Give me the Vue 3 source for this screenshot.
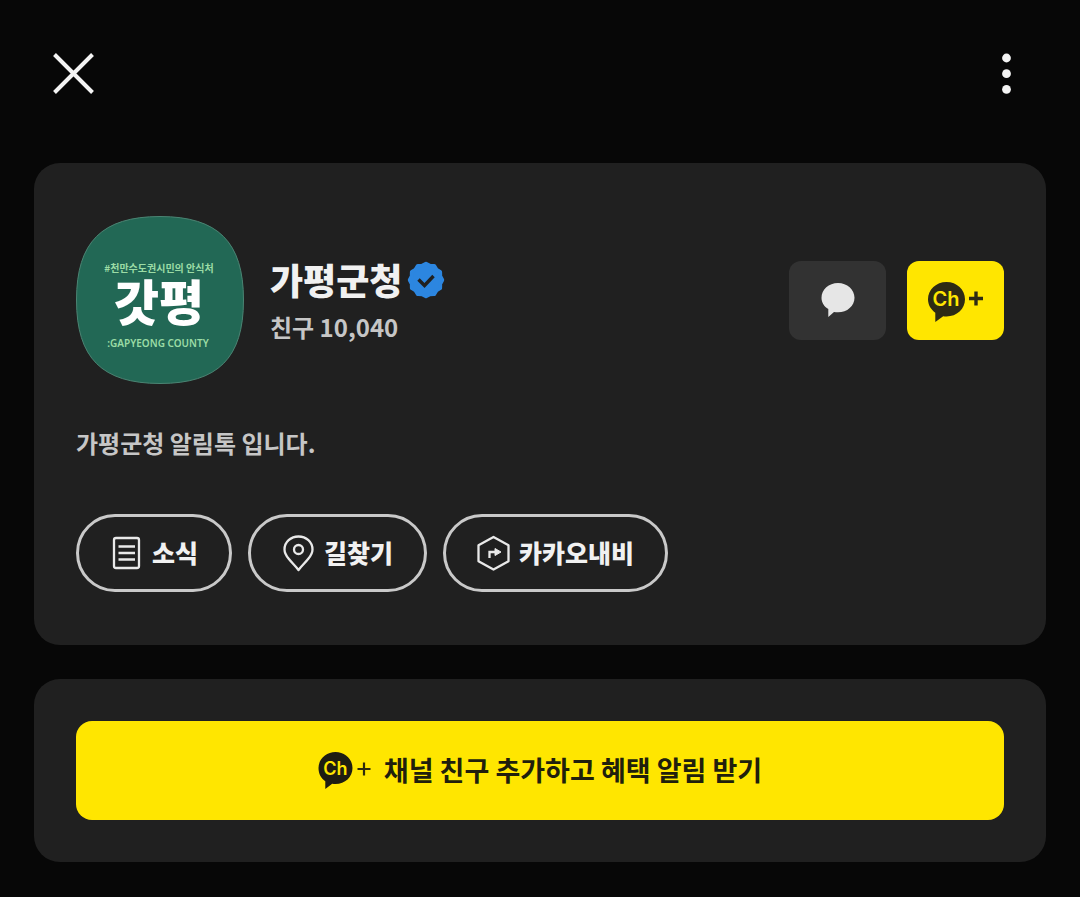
<script setup>
const links = [
  { id: 'news', label: '소식' },
  { id: 'directions', label: '길찾기' },
  { id: 'navi', label: '카카오내비' },
]
</script>

<template>
  <div class="page">
    <header class="topbar">
      <button class="icon-button" type="button" aria-label="닫기">
        <svg width="44" height="44" viewBox="0 0 44 44" fill="none" stroke="#f4f4f4" stroke-width="4">
          <path d="M3.500 2.500L41.500 40.500M41.500 2.500L3.500 40.500" />
        </svg>
      </button>
      <button class="icon-button" type="button" aria-label="더보기">
        <svg width="44" height="44" viewBox="0 0 44 44" fill="#f4f4f4">
          <circle cx="21.500" cy="6" r="4.4" />
          <circle cx="21.500" cy="21.700" r="4.4" />
          <circle cx="21.500" cy="37.400" r="4.400" />
        </svg>
      </button>
    </header>

    <main class="content">
      <section class="card profile">
        <div class="head">
          <svg class="avatar" width="168" height="168" viewBox="0 0 168 168" role="img" aria-label="갓평">
            <path
              d="M84 .5C142 .5 167.500 26 167.500 84S142 167.500 84 167.500S.5 142 .5 84S26 .5 84 .5Z"
              fill="#226855" stroke="#4b8473"
            />
            <text class="tag" x="83" y="56" text-anchor="middle">#천만수도권시민의 안식처</text>
            <text class="logo" x="83" y="105" text-anchor="middle">갓평</text>
            <text class="county" x="82" y="131" text-anchor="middle">:GAPYEONG COUNTY</text>
          </svg>
          <div class="identity">
            <h1 class="name">
              가평군청
              <svg class="badge" width="38" height="38" viewBox="0 0 38 38" role="img" aria-label="인증됨">
                <path
                  fill="#2c86e0" stroke="#2c86e0" stroke-width="4" stroke-linejoin="round"
                  d="M19 2.800L22.900 4.800L27.100 4.900L29.400 8.600L33.100 10.900L33.200 15.100L35.200 19L33.200 22.900L33.100 27.100L29.400 29.400L27.100 33.100L22.900 33.200L19 35.200L15.100 33.200L10.900 33.100L8.600 29.400L4.900 27.100L4.800 22.900L2.800 19L4.800 15.100L4.900 10.900L8.600 8.600L10.900 4.900L15.100 4.800Z"
                />
                <path d="M11.500 18.500L17.500 24.500L26.500 15" fill="none" stroke="#202020" stroke-width="3.400" />
              </svg>
            </h1>
            <p class="friends">친구 10,040</p>
          </div>
          <div class="actions">
            <button class="action chat" type="button" aria-label="채팅">
              <svg width="34" height="36" viewBox="0 0 34 36" fill="#e6e6e6">
                <path d="M17 1C26.200 1 33.500 7.500 33.500 15.700S26.200 30.300 17 30.300C15.500 30.300 14.200 30.200 13 29.900L7.300 35V27C3.200 24.500.5 20.500.5 15.700C.5 7.500 7.800 1 17 1Z" />
              </svg>
            </button>
            <button class="action add" type="button" aria-label="채널 추가">
              <svg width="56" height="38" viewBox="0 0 56 38">
                <path fill="#2e2b14" d="M18.500 1C28.800 1 37 8.500 37 18.300S28.800 35.500 18.500 35.500C17.300 35.500 16.300 35.400 15.200 35.200L7.300 41V31.700C3 28.700 0 24 0 18.300C0 8.500 8.200 1 18.500 1Z" />
                <text class="ch" x="18" y="25" text-anchor="middle">Ch</text>
                <path d="M48 10.500V24.500M41 17.500H55" stroke="#2e2b14" stroke-width="3.400" />
              </svg>
            </button>
          </div>
        </div>

        <p class="about">가평군청 알림톡 입니다.</p>

        <nav class="links">
          <a v-for="link in links" :key="link.id" class="pill" href="#">
            <svg width="34" height="38" viewBox="0 0 34 38" fill="none" stroke="#e9e9e9" stroke-width="2.300">
              <template v-if="link.id === 'news'">
                <rect x="4" y="4" width="25" height="30" rx="2" />
                <path d="M8.500 12.500H25M8.500 19H25M8.500 25.500H25" />
              </template>
              <template v-else-if="link.id === 'directions'">
                <path d="M16.500 36C14 32.500 10 29 6.500 24.500C3.800 21.200 2.500 18.700 2.500 15.500C2.500 8 8.800 2.500 16.500 2.500S30.500 8 30.500 15.500C30.500 18.700 29.200 21.200 26.500 24.500C23 29 19 32.500 16.500 36Z" stroke-linejoin="round" />
                <circle cx="16.500" cy="15.500" r="4.500" />
              </template>
              <template v-else>
                <path d="M16.500 3L31.500 11.200V27.200L16.500 35.500L1.500 27.200V11.200Z" stroke-linejoin="round" />
                <path d="M12.500 24V18H19" />
                <path d="M18 14.500L24 18L18 21.500Z" fill="#e9e9e9" stroke-width="1" />
              </template>
            </svg>
            <span class="label">{{ link.label }}</span>
          </a>
        </nav>
      </section>

      <section class="card promo">
        <button class="cta" type="button">
          <svg width="54" height="38" viewBox="0 0 54 38">
            <path fill="#1e1d12" d="M17.500 0C27 0 34.500 7 34.500 16S27 32 17.500 32C16.300 32 15.300 31.900 14.200 31.700L7.300 37V29.200C3 26.500.5 21.500.5 16C.5 7 8 0 17.500 0Z" />
            <text class="ch ch-small" x="17.500" y="22.500" text-anchor="middle">Ch</text>
            <path d="M46 10.500V23.500M39.500 17H52.500" stroke="#2e2b0c" stroke-width="2.200" />
          </svg>
          <span class="label">채널 친구 추가하고 혜택 알림 받기</span>
        </button>
      </section>
    </main>
  </div>
</template>

<style>
body {
  margin: 0;
  background: #070707;
}
</style>

<style scoped>
.page {
  box-sizing: border-box;
  min-height: 100vh;
  padding: 0 34px 34px;
  background: #070707;
  color: #f1f1f1;
  font-family: "Noto Sans CJK KR", "Noto Sans", sans-serif;
}

button {
  padding: 0;
  border: 0;
  background: none;
  font: inherit;
  color: inherit;
  cursor: pointer;
}

svg {
  display: block;
  flex: none;
  overflow: visible;
}

.topbar {
  display: flex;
  justify-content: space-between;
  padding: 52px 17px 67px;
}

.content {
  display: flex;
  flex-direction: column;
  gap: 34px;
}

.card {
  border-radius: 26px;
  background: #202020;
}

.profile {
  padding: 53px 42px;
}

.head {
  display: flex;
  align-items: center;
}

.tag {
  font-size: 10px;
  font-weight: 700;
  fill: #9bdca5;
}

.logo {
  font-size: 49px;
  font-weight: 900;
  fill: #ffffff;
}

.county {
  font-family: "Noto Sans", sans-serif;
  font-size: 10px;
  font-weight: 600;
  fill: #9bdca5;
}

.identity {
  flex: 1;
  margin-left: 26px;
  padding-top: 2px;
}

.name {
  display: flex;
  align-items: center;
  gap: 5px;
  margin: 0;
  font-size: 36px;
  font-weight: 900;
  line-height: 48px;
}

.badge {
  margin-top: 2px;
}

.friends {
  margin: 4px 0 0;
  color: #c6c6c6;
  font-size: 24px;
  font-weight: 700;
  line-height: 40px;
}

.actions {
  display: flex;
  gap: 21px;
}

.action {
  display: flex;
  align-items: center;
  justify-content: center;
  width: 97px;
  height: 79px;
  border-radius: 12px;
}

.chat {
  background: #323232;
}

.add {
  background: #ffe600;
}

.ch {
  font-family: Inter, sans-serif;
  font-size: 20px;
  font-weight: 600;
  fill: #ffe600;
}

.ch-small {
  font-size: 18px;
}

.about {
  margin: 41px 0 53px;
  color: #c6c6c6;
  font-size: 24px;
  font-weight: 700;
  line-height: 36px;
}

.links {
  display: flex;
  flex-wrap: wrap;
  gap: 16px;
}

.pill {
  display: flex;
  align-items: center;
  gap: 8px;
  box-sizing: border-box;
  height: 78px;
  padding: 0 31px;
  border: 3px solid #c9c9c9;
  border-radius: 39px;
  color: #f1f1f1;
  font-size: 25px;
  font-weight: 900;
  line-height: 36px;
  text-decoration: none;
}

.label {
  padding-bottom: 2px;
}

.promo {
  padding: 42px;
}

.cta {
  display: flex;
  align-items: center;
  justify-content: center;
  gap: 12px;
  width: 100%;
  min-height: 99px;
  border-radius: 16px;
  background: #ffe600;
  color: #211f0c;
  font-size: 27px;
  font-weight: 700;
}
</style>
